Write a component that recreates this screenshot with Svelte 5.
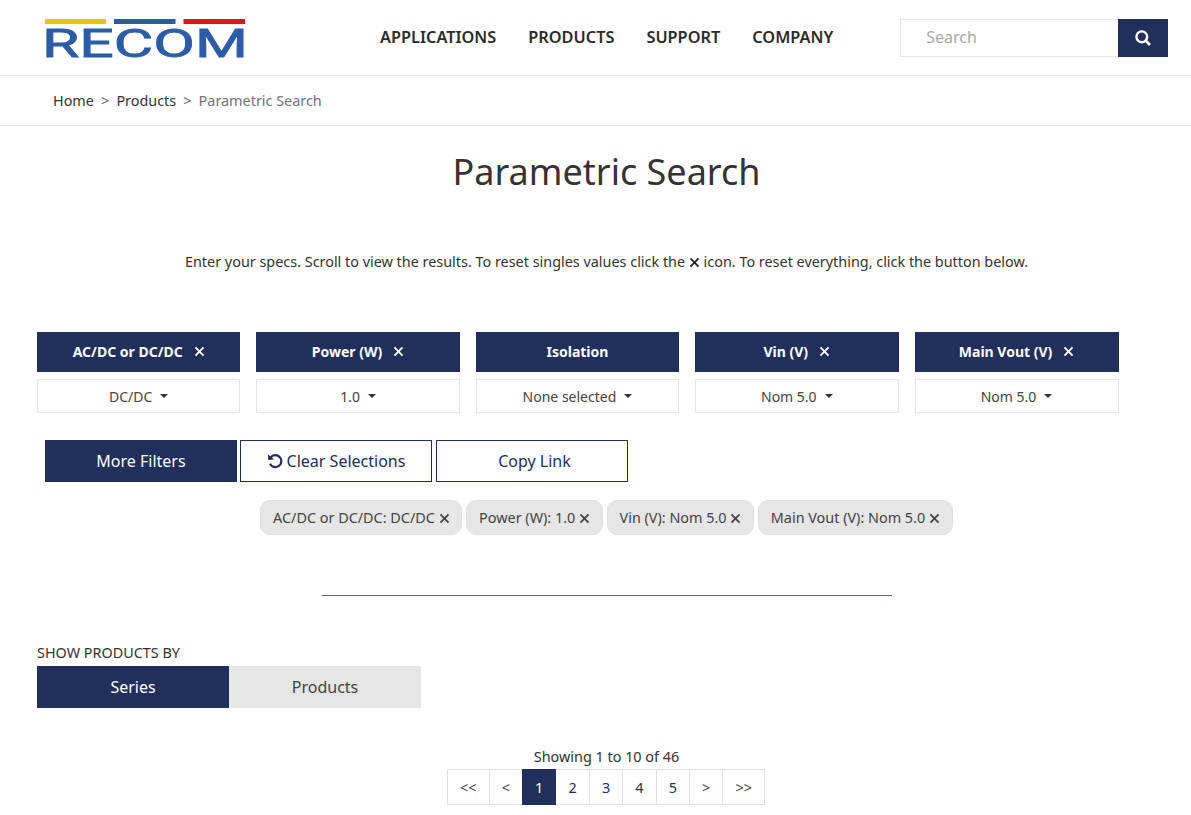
<script>
  const nav = ['APPLICATIONS', 'PRODUCTS', 'SUPPORT', 'COMPANY'];
  const filters = [
    { label: 'AC/DC or DC/DC', value: 'DC/DC', x: true },
    { label: 'Power (W)', value: '1.0', x: true },
    { label: 'Isolation', value: 'None selected', x: false },
    { label: 'Vin (V)', value: 'Nom 5.0', x: true },
    { label: 'Main Vout (V)', value: 'Nom 5.0', x: true }
  ];
  const chips = ['AC/DC or DC/DC: DC/DC', 'Power (W): 1.0', 'Vin (V): Nom 5.0', 'Main Vout (V): Nom 5.0'];
  const pages = ['<<', '<', '1', '2', '3', '4', '5', '>', '>>'];
  const isNum = (p) => /\d/.test(p);
</script>

{#snippet cross(size)}
  <svg class="cross" width={size} height={size} viewBox="0 0 12 12" aria-hidden="true">
    <path d="M1.6 1.6 L10.4 10.4 M10.4 1.6 L1.6 10.4" fill="none" stroke="currentColor" stroke-width="2" />
  </svg>
{/snippet}

<div class="page">
  <header class="header">
    <a class="logo" href="#top" aria-label="RECOM">
      <svg width="213" height="52" viewBox="-6 0 213 52">
        <rect x="0" y="0" width="61" height="5" fill="#ffbf00" />
        <rect x="69" y="0" width="61.5" height="5" fill="#2b5ca8" />
        <rect x="138.5" y="0" width="61.5" height="5" fill="#d8171c" />
        <text x="-3" y="37.6" textLength="206" lengthAdjust="spacingAndGlyphs" class="logotext">RECOM</text>
      </svg>
    </a>
    <nav class="nav">
      {#each nav as item}<a href="#top">{item}</a>{/each}
    </nav>
    <div class="search">
      <div class="search-input">Search</div>
      <button class="search-btn" aria-label="Search">
        <svg width="16" height="16" viewBox="0 0 16 16">
          <circle cx="6.8" cy="6.8" r="5.4" fill="none" stroke="#fff" stroke-width="2.4" />
          <path d="M10.6 10.6 L15 15" stroke="#fff" stroke-width="2.8" />
        </svg>
      </button>
    </div>
  </header>

  <div class="crumbs">
    <a href="#top">Home</a><span class="sep">&gt;</span><a href="#top">Products</a><span class="sep">&gt;</span><span class="current">Parametric Search</span>
  </div>

  <main class="main">
    <h1>Parametric Search</h1>
    <p class="intro">Enter your specs. Scroll to view the results. To reset singles values click the <span class="inline-x">{@render cross(11)}</span> icon. To reset everything, click the button below.</p>

    <div class="filters">
      {#each filters as f}
        <div class="filter">
          <div class="filter-head">
            <span>{f.label}</span>
            {#if f.x}{@render cross(11)}{/if}
          </div>
          <div class="filter-select"><span>{f.value}</span><i class="caret"></i></div>
        </div>
      {/each}
    </div>

    <div class="actions">
      <button class="btn solid">More Filters</button>
      <button class="btn outline">
        <svg width="16" height="16" viewBox="0 0 16 16" aria-hidden="true">
          <path d="M3.6 4.4 A6 6 0 1 1 3 10.8" fill="none" stroke="#202f5c" stroke-width="2.2" />
          <path d="M1 1.2 L1.2 7 L7 6.6 Z" fill="#202f5c" />
        </svg>
        Clear Selections
      </button>
      <button class="btn outline copy">Copy Link</button>
    </div>

    <div class="chips">
      {#each chips as c}
        <span class="chip">{c} {@render cross(11)}</span>
      {/each}
    </div>

    <hr class="rule" />

    <div class="show-label">SHOW PRODUCTS BY</div>
    <div class="toggle">
      <button class="tab on">Series</button>
      <button class="tab">Products</button>
    </div>

    <div class="showing">Showing 1 to 10 of 46</div>
    <div class="pager">
      {#each pages as p}
        <button class="pg" class:active={p === '1'} class:num={isNum(p)} class:wide={p === '<<' || p === '>>'}>{p}</button>
      {/each}
    </div>
  </main>
</div>

<style>
  :global(body) {
    margin: 0;
    background: #fff;
    font-family: "Noto Sans", "Open Sans", sans-serif;
    color: #333;
    overflow: hidden;
  }
  .page { width: 1191px; height: 815px; overflow: hidden; }
  a { color: inherit; text-decoration: none; }
  button { font-family: inherit; cursor: pointer; }

  .header {
    height: 75px;
    border-bottom: 1px solid #e6e6e6;
    display: flex;
    align-items: flex-start;
    box-sizing: content-box;
  }
  .logo { display: block; margin: 19px 0 0 39px; width: 213px; height: 52px; }
  .logotext {
    font-family: "Roboto", sans-serif;
    font-weight: 400;
    font-size: 39px;
    fill: #2b5ca8;
    stroke: #2b5ca8;
    stroke-width: 0.8px;
  }
  .nav {
    display: flex;
    gap: 32px;
    margin: 27px 0 0 128px;
    font-size: 16.32px;
    font-weight: 600;
    line-height: 20px;
    color: #2b2b2b;
  }
  .search { display: flex; margin: 19px 0 0 67px; height: 38px; }
  .search-input {
    box-sizing: border-box;
    width: 218px;
    height: 38px;
    border: 1px solid #e6e6e6;
    border-right: 0;
    padding-left: 25px;
    font-size: 16px;
    line-height: 35px;
    color: #a8a8a8;
  }
  .search-btn {
    width: 50px;
    height: 38px;
    border: 0;
    padding: 0;
    background: #202f5c;
    display: flex;
    align-items: center;
    justify-content: center;
  }

  .crumbs {
    height: 49px;
    border-bottom: 1px solid #e6e6e6;
    box-sizing: content-box;
    padding-left: 53px;
    font-size: 14.4px;
    line-height: 50px;
    color: #333;
  }
  .sep { margin: 0 7.1px; color: #666; }
  .current { color: #6c757d; }

  .main { margin-left: 37px; width: 1139px; }
  h1 {
    margin: 20px 0 0;
    font-size: 36px;
    font-weight: 400;
    line-height: 52px;
    text-align: center;
    color: #333;
  }
  .intro {
    margin: 52px 0 0;
    font-size: 14.4px;
    line-height: 24px;
    text-align: center;
    color: #333;
  }
  .inline-x { color: #222; }
  .cross { display: inline-block; vertical-align: -1px; }

  .filters { display: flex; gap: 16px; margin-top: 58px; width: 1081.6px; }
  .filter { flex: 1 1 0; min-width: 0; }
  .filter:last-child { flex: 0 0 204.1px; }
  .filter-head {
    box-sizing: border-box;
    height: 40px;
    padding-bottom: 2px;
    background: #202f5c;
    color: #fff;
    font-size: 14px;
    font-weight: 700;
    display: flex;
    align-items: center;
    justify-content: center;
    gap: 11px;
  }
  .filter-select {
    box-sizing: border-box;
    height: 34px;
    margin-top: 7px;
    border: 1px solid #e6e6e6;
    display: flex;
    align-items: center;
    justify-content: center;
    gap: 8px;
    font-size: 14px;
    color: #444;
  }
  .caret {
    width: 0;
    height: 0;
    border-left: 4px solid transparent;
    border-right: 4px solid transparent;
    border-top: 4px solid #333;
    margin-top: -1px;
  }

  .actions { display: flex; gap: 3px; margin: 27px 0 0 8px; }
  .btn {
    box-sizing: border-box;
    width: 192px;
    height: 42px;
    font-size: 16px;
    padding: 0;
    border: 1px solid #202f5c;
  }
  .solid { background: #202f5c; color: #fff; }
  .outline { background: #fff; color: #202f5c; display: flex; align-items: center; justify-content: center; gap: 4px; }
  .copy { margin-left: 1px; padding-left: 5px; }

  .chips { display: flex; justify-content: center; gap: 4px; margin-top: 18px; }
  .chip {
    box-sizing: border-box;
    height: 35px;
    padding: 0 11.75px;
    border-radius: 10px;
    border: 1px solid #e0e0e0;
    background: #e6e6e6;
    font-size: 14.4px;
    line-height: 33px;
    color: #444;
    white-space: nowrap;
  }

  .rule {
    width: 570px;
    margin: 60px auto 0;
    border: 0;
    border-top: 1px solid #5d6684;
  }

  .show-label { margin-top: 47px; font-size: 14.4px; line-height: 20px; color: #333; }
  .toggle { display: flex; margin-top: 3px; }
  .tab {
    width: 192px;
    height: 42px;
    border: 0;
    background: #e6e6e6;
    color: #444;
    font-size: 16px;
    padding: 0;
  }
  .tab.on { background: #202f5c; color: #fff; }

  .showing { margin-top: 39px; text-align: center; font-size: 14.4px; line-height: 20px; color: #333; }
  .pager { display: flex; justify-content: center; margin-top: 2px; }
  .pg {
    box-sizing: border-box;
    width: 34.4px;
    height: 36px;
    border: 1px solid #dee2e6;
    margin-left: -1px;
    background: #fff;
    color: #444;
    font-size: 14.4px;
    padding: 0;
  }
  .pg.num { color: #202f5c; }
  .pg.wide { width: 42.6px; }
  .pg.active { position: relative; background: #202f5c; border-color: #202f5c; color: #fff; }
</style>
